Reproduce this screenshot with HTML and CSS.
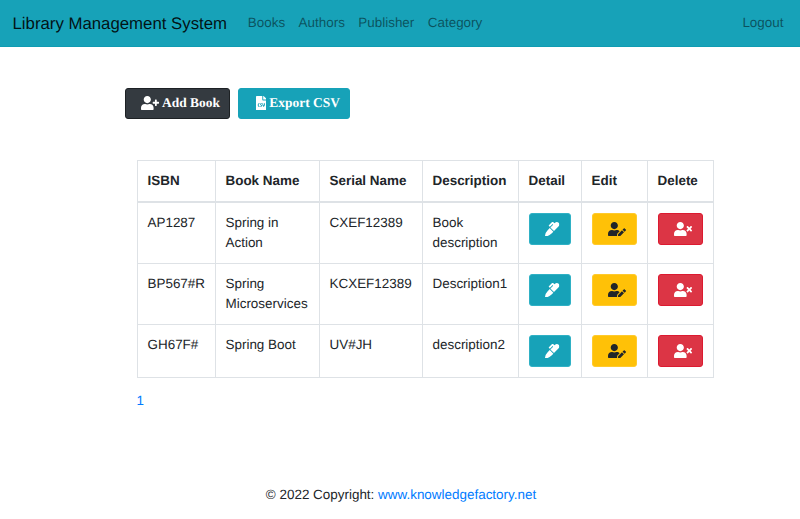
FILE: index.html
```html
<!DOCTYPE html>
<html lang="en">
<head>
<meta charset="utf-8">
<title>Library Management System</title>
<link rel="stylesheet" href="styles.css">
</head>
<body>
<svg class="defs" width="0" height="0" aria-hidden="true">
  <symbol id="i-user" viewBox="0 0 640 512"><path d="M224 256c70.700 0 128-57.300 128-128S294.700 0 224 0 96 57.300 96 128s57.300 128 128 128zm89.600 32h-16.700c-22.200 10.200-46.900 16-72.900 16s-50.600-5.800-72.900-16h-16.700C60.200 288 0 348.200 0 422.400V464c0 26.500 21.500 48 48 48h352c26.500 0 48-21.500 48-48v-41.600c0-74.200-60.200-134.400-134.400-134.400z"/></symbol>
  <symbol id="i-plus" viewBox="0 0 640 512"><use href="#i-user"/><path d="M624 208h-64v-64c0-8.800-7.200-16-16-16h-32c-8.800 0-16 7.200-16 16v64h-64c-8.800 0-16 7.200-16 16v32c0 8.800 7.200 16 16 16h64v64c0 8.800 7.200 16 16 16h32c8.800 0 16-7.200 16-16v-64h64c8.800 0 16-7.200 16-16v-32c0-8.800-7.200-16-16-16z"/></symbol>
  <symbol id="i-times" viewBox="0 0 640 512"><use href="#i-user"/><path d="M589.600 240l50.600-50.600c6.300-6.300 6.300-16.300 0-22.600l-22.600-22.600c-6.300-6.300-16.300-6.300-22.600 0L544 194.800l-50.600-50.600c-6.300-6.300-16.300-6.300-22.600 0l-22.600 22.600c-6.300 6.300-6.300 16.300 0 22.600l50.600 50.400-50.600 50.600c-6.300 6.300-6.300 16.300 0 22.600l22.600 22.600c6.300 6.300 16.300 6.300 22.600 0l50.600-50.600 50.600 50.600c6.300 6.300 16.300 6.300 22.600 0l22.600-22.600c6.300-6.300 6.300-16.300 0-22.600z"/></symbol>
  <symbol id="i-edit" viewBox="0 0 640 512"><path d="M224 256c70.700 0 128-57.300 128-128S294.700 0 224 0 96 57.300 96 128s57.300 128 128 128zm89.600 32h-16.700c-22.200 10.200-46.900 16-72.900 16s-50.600-5.800-72.900-16h-16.700C60.200 288 0 348.200 0 422.400V464c0 26.500 21.500 48 48 48h274.900c-2.400-6.800-3.400-14-2.600-21.300l6.800-60.900 1.200-11.100 7.900-7.900 77.300-77.300c-24.500-27.700-60-45.500-99.900-45.500zm45.300 145.300l-6.800 61c-1.100 10.200 7.500 18.800 17.600 17.600l60.900-6.800 137.900-137.900-71.700-71.700-137.900 137.800zM633 268.900L595.100 231c-9.300-9.300-24.500-9.300-33.800 0l-37.800 37.800-4.100 4.100 71.800 71.700 41.800-41.800c9.300-9.400 9.300-24.500 0-33.900z"/></symbol>
  <symbol id="i-marker" viewBox="0 0 512 512"><path d="M93.950 290.030A327.038 327.038 0 0 0 .17 485.110l-.03.230c-1.700 15.280 11.510 28.490 26.790 26.790a327.027 327.027 0 0 0 195.340-93.800l75.530-75.530-128.330-128.330-75.520 75.530zM485.490 26.510c-35.350-35.350-92.660-35.350-128.010 0l-21.760 21.760-36.560-36.570c-15.620-15.620-40.950-15.620-56.560 0L138.340 116.970c-6.250 6.250-6.250 16.380 0 22.630l22.620 22.620c6.250 6.250 16.380 6.250 22.630 0l87.150-87.150 19.590 19.590L191.860 193.140l128.330 128.330L485.490 154.510c35.350-35.340 35.350-92.650 0-128z"/></symbol>
  <symbol id="i-csv" viewBox="0 0 384 512"><path d="M224 136V0H24C10.700 0 0 10.700 0 24v464c0 13.300 10.700 24 24 24h336c13.300 0 24-10.700 24-24V160H248c-13.200 0-24-10.800-24-24zm-96 144c0 4.420-3.580 8-8 8h-8c-8.840 0-16 7.160-16 16v32c0 8.840 7.160 16 16 16h8c4.420 0 8 3.580 8 8v16c0 4.420-3.580 8-8 8h-8c-26.510 0-48-21.490-48-48v-32c0-26.510 21.490-48 48-48h8c4.420 0 8 3.580 8 8v16zm44.270 104H160c-4.420 0-8-3.580-8-8v-16c0-4.420 3.580-8 8-8h12.270c5.950 0 10.410-3.500 10.410-6.620 0-1.300-.750-2.660-2.120-3.840l-21.890-18.770c-8.470-7.220-13.330-17.480-13.330-28.140 0-21.300 19.020-38.620 42.410-38.620H200c4.420 0 8 3.580 8 8v16c0 4.420-3.580 8-8 8h-12.270c-5.950 0-10.410 3.500-10.410 6.620 0 1.300.750 2.660 2.120 3.840l21.890 18.770c8.470 7.220 13.330 17.480 13.330 28.140.010 21.290-19 38.620-42.390 38.620zM256 264v20.800c0 20.270 5.700 40.170 16 56.880 10.300-16.700 16-36.610 16-56.880V264c0-4.420 3.580-8 8-8h16c4.420 0 8 3.580 8 8v20.800c0 35.480-12.880 68.890-36.280 94.090-3.020 3.250-7.270 5.110-11.720 5.110s-8.700-1.860-11.720-5.110c-23.400-25.200-36.280-58.610-36.280-94.090V264c0-4.420 3.580-8 8-8h16c4.420 0 8 3.580 8 8zm121-159L279.100 7c-4.500-4.500-10.600-7-17-7H256v128h128v-6.100c0-6.300-2.500-12.400-7-16.900z"/></symbol>
</svg>
<nav class="navbar">
  <a class="brand" href="#">Library Management System</a>
  <ul class="nav-links">
    <li><a href="#">Books</a></li>
    <li><a href="#">Authors</a></li>
    <li><a href="#">Publisher</a></li>
    <li><a href="#">Category</a></li>
  </ul>
  <a class="logout" href="#">Logout</a>
</nav>
<main class="content">
  <div class="actions">
    <a class="btn btn-add" href="#"><svg class="ic-user"><use href="#i-plus"/></svg>Add Book</a>
    <a class="btn btn-export" href="#"><svg class="ic-file"><use href="#i-csv"/></svg>Export CSV</a>
  </div>
  <table class="books">
    <thead>
      <tr><th>ISBN</th><th>Book Name</th><th>Serial Name</th><th>Description</th><th>Detail</th><th>Edit</th><th>Delete</th></tr>
    </thead>
    <tbody>
      <tr>
        <td>AP1287</td><td>Spring in Action</td><td>CXEF12389</td><td>Book description</td>
        <td><a class="ibtn info" href="#"><svg class="ic-marker"><use href="#i-marker"/></svg></a></td>
        <td><a class="ibtn warn" href="#"><svg class="ic-user"><use href="#i-edit"/></svg></a></td>
        <td><a class="ibtn danger" href="#"><svg class="ic-user"><use href="#i-times"/></svg></a></td>
      </tr>
      <tr>
        <td>BP567#R</td><td>Spring Microservices</td><td>KCXEF12389</td><td>Description1</td>
        <td><a class="ibtn info" href="#"><svg class="ic-marker"><use href="#i-marker"/></svg></a></td>
        <td><a class="ibtn warn" href="#"><svg class="ic-user"><use href="#i-edit"/></svg></a></td>
        <td><a class="ibtn danger" href="#"><svg class="ic-user"><use href="#i-times"/></svg></a></td>
      </tr>
      <tr>
        <td>GH67F#</td><td>Spring Boot</td><td>UV#JH</td><td>description2</td>
        <td><a class="ibtn info" href="#"><svg class="ic-marker"><use href="#i-marker"/></svg></a></td>
        <td><a class="ibtn warn" href="#"><svg class="ic-user"><use href="#i-edit"/></svg></a></td>
        <td><a class="ibtn danger" href="#"><svg class="ic-user"><use href="#i-times"/></svg></a></td>
      </tr>
    </tbody>
  </table>
  <a class="page" href="#">1</a>
</main>
<footer class="footer">© 2022 Copyright: <a href="#">www.knowledgefactory.net</a></footer>
</body>
</html>
```
FILE: styles.css
```css
* { box-sizing: border-box; }
html, body { margin: 0; height: 100%; }
body { font-family: "Liberation Sans", Arial, sans-serif; font-size: 13.44px; line-height: 20px; color: #212529; background: #fff; text-rendering: geometricPrecision; }
a { text-decoration: none; }
.defs { position: absolute; }
.navbar { display: flex; align-items: center; height: 47px; padding: 0 16.5px 0 12.5px; background: #17a2b8; border-bottom: 1px solid #0f9cb2; }
.brand { font-size: 16.8px; color: rgba(0,0,0,.9); margin: 2px 14px 0 0; }
.nav-links { display: flex; list-style: none; margin: 0; padding: 0; flex: 1; }
.nav-links a, .logout { display: block; padding: 0 6.72px; color: rgba(0,0,0,.5); }
.logout { padding: 0; }
.content { padding: 41px 86px 0 125px; }
.actions { display: flex; gap: 8px; margin-bottom: 41px; }
.btn { display: flex; align-items: center; height: 31px; padding-bottom: 1px; border-radius: 3px; font-family: "Liberation Serif", serif; font-weight: 700; font-size: 13.44px; color: #fff; border: 1px solid transparent; }
.btn-add { width: 105px; padding-left: 15px; background: #343a40; border-color: #1d2124; }
.btn-export { width: 112px; padding-left: 16.5px; background: #17a2b8; border-color: #17a2b8; }
.btn .ic-user { margin-right: 3px; }
.ic-user { width: 18px; height: 14.4px; fill: currentColor; flex: none; }
.ic-file { width: 10.8px; height: 14.4px; fill: #fff; flex: none; margin-right: 3px; }
.ic-marker { width: 14.4px; height: 14.4px; fill: #fff; }
.books { margin-left: 11.5px; width: 576px; border-collapse: collapse; table-layout: fixed; }
.books th, .books td { border: 1px solid #dee2e6; padding: 10px; vertical-align: top; text-align: left; }
.books th { border-bottom-width: 2px; font-weight: 700; color: #212529; }
.books th:nth-child(1) { width: 78px; }
.books th:nth-child(2) { width: 104px; }
.books th:nth-child(3) { width: 103px; }
.books th:nth-child(4) { width: 96px; }
.books th:nth-child(5) { width: 63px; }
.books th:nth-child(6) { width: 66px; }
.books th:nth-child(7) { width: 66px; }
.ibtn { display: flex; align-items: center; justify-content: center; height: 32px; padding-left: 6px; border-radius: 3px; border: 1px solid transparent; }
.info { width: 42px; background: #17a2b8; border-color: #2fb1c5; color: #fff; }
.warn { width: 45px; background: #ffc107; border-color: #ffca2c; color: #212529; }
.danger { width: 45px; background: #dc3545; border-color: #dc1a30; color: #fff; }
.page { display: inline-block; margin: 13px 0 0 11.5px; color: #007bff; }
.footer { position: absolute; left: 2px; right: 0; top: 485px; text-align: center; color: #212529; }
.footer a { color: #007bff; }
```
